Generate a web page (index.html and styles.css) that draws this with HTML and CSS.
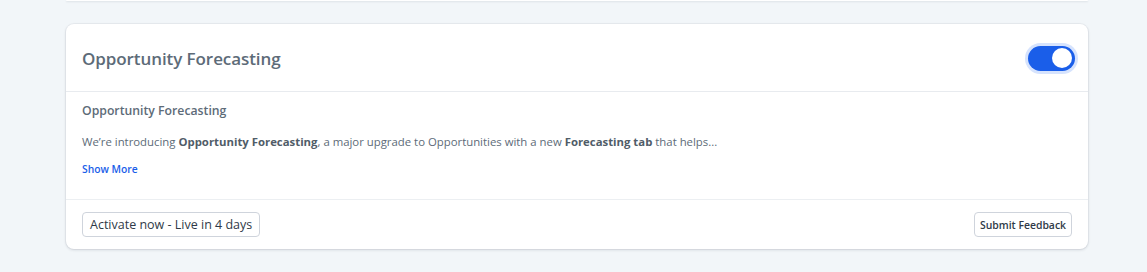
FILE: index.html
```html
<!DOCTYPE html>
<html>
<head>
<meta charset="utf-8">
<link rel="stylesheet" href="styles.css">
</head>
<body>
<div class="page">
  <div class="card-prev"></div>
  <div class="card">
    <div class="card-header">
      <h2 class="title">Opportunity Forecasting</h2>
      <button class="toggle" aria-pressed="true"><span class="knob"></span></button>
    </div>
    <div class="card-body">
      <div class="subtitle">Opportunity Forecasting</div>
      <p class="desc">We’re introducing <b>Opportunity Forecasting</b>, a major upgrade to Opportunities with a new <b>Forecasting tab</b> that helps...</p>
      <a class="show-more">Show More</a>
    </div>
    <div class="card-footer">
      <button class="btn btn-activate">Activate now - Live in 4 days</button>
      <button class="btn btn-feedback">Submit Feedback</button>
    </div>
  </div>
</div>
</body>
</html>
```
FILE: styles.css
```css
* { box-sizing: border-box; }
html, body { margin: 0; padding: 0; }
body {
  background: #f2f6f9;
  font-family: "Open Sans", "Noto Sans", sans-serif;
  width: 1147px;
  height: 272px;
  overflow: hidden;
}
.page {
  padding: 0 59px 0 66px;
  display: flex;
  flex-direction: column;
  gap: 23px;
}
.card-prev {
  height: 1px;
  background: #fff;
  box-shadow: 0 1px 2px rgba(16, 24, 40, 0.12);
  border-radius: 0 0 8px 8px;
}
.card {
  background: #fff;
  border-radius: 8px;
  box-shadow: 0 1px 3px rgba(16, 24, 40, 0.14), 0 0 0 1px rgba(16, 24, 40, 0.04);
  height: 225px;
  display: flex;
  flex-direction: column;
}
.card-header {
  height: 68px;
  border-bottom: 1px solid #e8ebef;
  display: flex;
  align-items: center;
  justify-content: space-between;
  padding: 0 13px 0 16px;
}
.title {
  margin: 0;
  padding-top: 1px;
  font-size: 17px;
  font-weight: 600;
  color: #5d6b78;
  letter-spacing: -0.08px;
}
.toggle {
  width: 47px;
  height: 25px;
  border: none;
  padding: 0;
  border-radius: 13px;
  background: #1a5ee9;
  box-shadow: 0 0 0 3px #d6e3fd;
  display: flex;
  align-items: center;
  justify-content: flex-end;
  padding-right: 3px;
  margin-top: 1px;
}
.knob {
  width: 20px;
  height: 20px;
  border-radius: 50%;
  background: #fff;
}
.card-body {
  padding: 10px 16px 0;
  height: 108px;
  border-bottom: 1px solid #eceff2;
}
.subtitle {
  font-size: 12.25px;
  font-weight: 600;
  color: #5d6b78;
  line-height: 18px;
}
.desc {
  margin: 13px 0 0;
  font-size: 11.37px;
  color: #5d6b78;
  line-height: 18px;
}
.desc b { font-weight: 700; color: #505c68; }
.show-more {
  display: block;
  margin-top: 10px;
  font-size: 10.3px;
  font-weight: 600;
  color: #1a5ee9;
  line-height: 16px;
}
.card-footer {
  flex: 1;
  display: flex;
  align-items: center;
  justify-content: space-between;
  padding: 0 16px;
}
.btn {
  background: #fff;
  border: 1px solid #cfd4dc;
  border-radius: 4px;
  font-family: "Open Sans", "Noto Sans", sans-serif;
  color: #2f3a48;
  height: 25px;
  padding: 0 7px;
  display: flex;
  align-items: center;
}
.btn-activate { font-size: 12.5px; }
.btn-feedback { font-size: 10.4px; font-weight: 600; padding: 0 5px; }
```
